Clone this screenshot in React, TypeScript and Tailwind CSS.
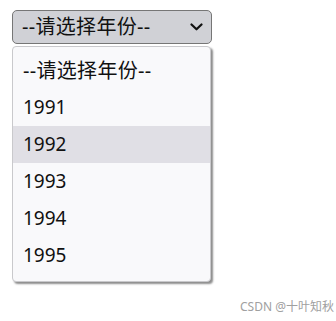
import React from "react";

const years = ["1991", "1992", "1993", "1994", "1995"];

export default function App() {
  const font = { fontFamily: '"Noto Sans", "Noto Sans CJK SC", sans-serif' };
  return (
    <div className="relative h-[321px] w-[336px] overflow-hidden bg-white" style={font}>
      {/* select box */}
      <div className="ml-[12px] mt-[10px] flex h-[34px] w-[200px] items-center justify-between rounded-[5px] border border-[#767676] bg-[#d0d1d6] pl-[9px] pr-[8px] text-[20px] leading-none text-[#111]">
        <span className="tracking-[0.3px]">--请选择年份--</span>
        <svg width="13" height="8" viewBox="0 0 13 8">
          <path d="M1.5 1.5 L6.5 6.3 L11.5 1.5" fill="none" stroke="#111" strokeWidth="2.2" strokeLinecap="round" strokeLinejoin="round" />
        </svg>
      </div>

      {/* open menu */}
      <div className="absolute left-[12px] top-[46px] w-[199px] rounded-[4px] border border-[#c9c9cc] bg-[#f9f9fb] pb-[7px] pt-[5px] text-[19px] text-[#111] shadow-[2px_2px_2px_rgba(0,0,0,0.45)]">
        <div className="flex h-[37px] items-center pl-[10px] text-[20px] tracking-[0.3px]">--请选择年份--</div>
        {years.map((y) => (
          <div
            key={y}
            className={
              "flex h-[37px] items-center pl-[10px] " + (y === "1992" ? "bg-[#e0dfe5]" : "")
            }
          >
            {y}
          </div>
        ))}
      </div>

      {/* watermark */}
      <div className="absolute left-[240px] top-[298px] text-[12px] text-[#a0a0a0]">CSDN @十叶知秋</div>
    </div>
  );
}
